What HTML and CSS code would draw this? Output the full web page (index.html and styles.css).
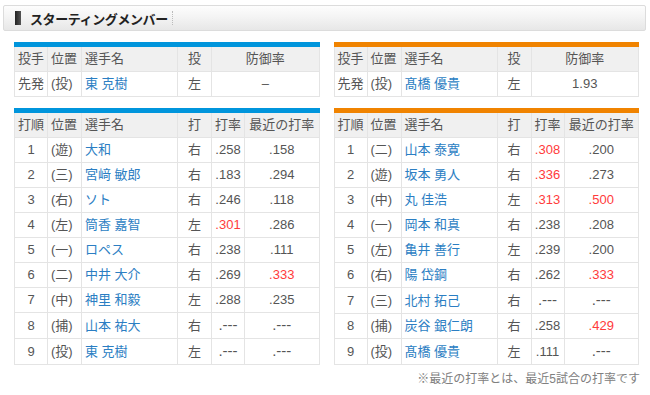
FILE: index.html
```html
<!DOCTYPE html>
<html lang="ja">
<head>
<meta charset="utf-8">
<link rel="stylesheet" href="styles.css">
</head>
<body>
<div class="page">
  <div class="title-bar">
    <span class="title-mark"></span>
    <h2 class="title">スターティングメンバー</h2>
    <span class="title-sep"></span>
  </div>

  <div class="columns">
    <div class="team team-blue">
      <div class="block">
        <table class="grid">
          <colgroup><col class="c1"><col class="c2"><col class="c3"><col class="c4"><col></colgroup>
          <tr class="head"><td>投手</td><td>位置</td><td>選手名</td><td class="ctr">投</td><td class="ctr">防御率</td></tr>
          <tr><td>先発</td><td>(投)</td><td class="name">東 克樹</td><td class="ctr">左</td><td class="ctr">–</td></tr>
        </table>
      </div>
      <div class="block">
        <table class="grid">
          <colgroup><col class="c1"><col class="c2"><col class="c3"><col class="c4"><col class="c5"><col></colgroup>
          <tr class="head"><td>打順</td><td>位置</td><td>選手名</td><td class="ctr">打</td><td class="ctr">打率</td><td class="ctr">最近の打率</td></tr>
          <tr><td class="ctr">1</td><td>(遊)</td><td class="name">大和</td><td class="ctr">右</td><td class="ctr">.258</td><td class="ctr">.158</td></tr>
          <tr><td class="ctr">2</td><td>(三)</td><td class="name">宮﨑 敏郎</td><td class="ctr">右</td><td class="ctr">.183</td><td class="ctr">.294</td></tr>
          <tr><td class="ctr">3</td><td>(右)</td><td class="name">ソト</td><td class="ctr">右</td><td class="ctr">.246</td><td class="ctr">.118</td></tr>
          <tr><td class="ctr">4</td><td>(左)</td><td class="name">筒香 嘉智</td><td class="ctr">左</td><td class="ctr hot">.301</td><td class="ctr">.286</td></tr>
          <tr><td class="ctr">5</td><td>(一)</td><td class="name">ロペス</td><td class="ctr">右</td><td class="ctr">.238</td><td class="ctr">.111</td></tr>
          <tr><td class="ctr">6</td><td>(二)</td><td class="name">中井 大介</td><td class="ctr">右</td><td class="ctr">.269</td><td class="ctr hot">.333</td></tr>
          <tr><td class="ctr">7</td><td>(中)</td><td class="name">神里 和毅</td><td class="ctr">左</td><td class="ctr">.288</td><td class="ctr">.235</td></tr>
          <tr><td class="ctr">8</td><td>(捕)</td><td class="name">山本 祐大</td><td class="ctr">右</td><td class="ctr"><span class="nil">.---</span></td><td class="ctr"><span class="nil">.---</span></td></tr>
          <tr><td class="ctr">9</td><td>(投)</td><td class="name">東 克樹</td><td class="ctr">左</td><td class="ctr"><span class="nil">.---</span></td><td class="ctr"><span class="nil">.---</span></td></tr>
        </table>
      </div>
    </div>

    <div class="team team-orange">
      <div class="block">
        <table class="grid">
          <colgroup><col class="c1"><col class="c2"><col class="c3"><col class="c4"><col></colgroup>
          <tr class="head"><td>投手</td><td>位置</td><td>選手名</td><td class="ctr">投</td><td class="ctr">防御率</td></tr>
          <tr><td>先発</td><td>(投)</td><td class="name">髙橋 優貴</td><td class="ctr">左</td><td class="ctr">1.93</td></tr>
        </table>
      </div>
      <div class="block">
        <table class="grid">
          <colgroup><col class="c1"><col class="c2"><col class="c3"><col class="c4"><col class="c5"><col></colgroup>
          <tr class="head"><td>打順</td><td>位置</td><td>選手名</td><td class="ctr">打</td><td class="ctr">打率</td><td class="ctr">最近の打率</td></tr>
          <tr><td class="ctr">1</td><td>(二)</td><td class="name">山本 泰寛</td><td class="ctr">右</td><td class="ctr hot">.308</td><td class="ctr">.200</td></tr>
          <tr><td class="ctr">2</td><td>(遊)</td><td class="name">坂本 勇人</td><td class="ctr">右</td><td class="ctr hot">.336</td><td class="ctr">.273</td></tr>
          <tr><td class="ctr">3</td><td>(中)</td><td class="name">丸 佳浩</td><td class="ctr">左</td><td class="ctr hot">.313</td><td class="ctr hot">.500</td></tr>
          <tr><td class="ctr">4</td><td>(一)</td><td class="name">岡本 和真</td><td class="ctr">右</td><td class="ctr">.238</td><td class="ctr">.208</td></tr>
          <tr><td class="ctr">5</td><td>(左)</td><td class="name">亀井 善行</td><td class="ctr">左</td><td class="ctr">.239</td><td class="ctr">.200</td></tr>
          <tr><td class="ctr">6</td><td>(右)</td><td class="name">陽 岱鋼</td><td class="ctr">右</td><td class="ctr">.262</td><td class="ctr hot">.333</td></tr>
          <tr><td class="ctr">7</td><td>(三)</td><td class="name">北村 拓己</td><td class="ctr">右</td><td class="ctr"><span class="nil">.---</span></td><td class="ctr"><span class="nil">.---</span></td></tr>
          <tr><td class="ctr">8</td><td>(捕)</td><td class="name">炭谷 銀仁朗</td><td class="ctr">右</td><td class="ctr">.258</td><td class="ctr hot">.429</td></tr>
          <tr><td class="ctr">9</td><td>(投)</td><td class="name">髙橋 優貴</td><td class="ctr">左</td><td class="ctr">.111</td><td class="ctr"><span class="nil">.---</span></td></tr>
        </table>
      </div>
    </div>
  </div>

  <p class="note">※最近の打率とは、最近5試合の打率です</p>
</div>
</body>
</html>
```

FILE: styles.css
```css
html, body {
  margin: 0;
  padding: 0;
  background: #fff;
}

body {
  font-family: "Liberation Sans", "Noto Sans CJK JP", sans-serif;
  font-size: 13px;
  color: #555;
}

.page {
  padding: 5px 4px 0 3px;
}

.title-bar {
  display: flex;
  align-items: center;
  height: 24px;
  border: 1px solid #dcdcdc;
  border-radius: 2px;
  background: linear-gradient(to bottom, #fdfdfd 0%, #f4f4f4 45%, #e7e7e7 100%);
  padding-left: 11px;
}

.title-mark {
  width: 6px;
  height: 14px;
  background: linear-gradient(to right, #222, #555);
  margin-right: 9px;
}

.title {
  margin: 0;
  font-size: 13px;
  font-weight: bold;
  color: #222;
  letter-spacing: -0.4px;
}

.title-sep {
  width: 0;
  height: 14px;
  border-left: 1px dotted #bbb;
  margin-left: 4px;
}

.columns {
  display: grid;
  grid-template-columns: 1fr 1fr;
  column-gap: 14px;
  padding: 11px 7px 0 11px;
}

.block {
  border-top: 5px solid #0095dc;
  margin-bottom: 11px;
}

.team-orange .block {
  border-top-color: #f08300;
}

.grid {
  width: 100%;
  border-collapse: collapse;
  table-layout: fixed;
}

.grid td {
  height: 24px;
  padding: 0 0 0 3px;
  border: 1px solid #e4e4e4;
  white-space: nowrap;
  overflow: hidden;
  line-height: 24px;
}

.grid td.ctr {
  text-align: center;
  padding: 0;
}

.grid .head td {
  background: #f0f0f0;
  color: #555;
}

.grid tr:first-child td {
  border-top: 0;
}

.c1 { width: 33px; }
.c2 { width: 34px; }
.c3 { width: 96px; }
.c4 { width: 34px; }
.c5 { width: 33px; }

.name {
  color: #2b7ec3;
}

.hot {
  color: #ff3b3b;
}

.nil {
  font-size: 15px;
  letter-spacing: 0;
  color: #555;
}

.note {
  margin: -7px 6px 0 0;
  text-align: right;
  font-size: 12px;
  color: #808080;
}
```
